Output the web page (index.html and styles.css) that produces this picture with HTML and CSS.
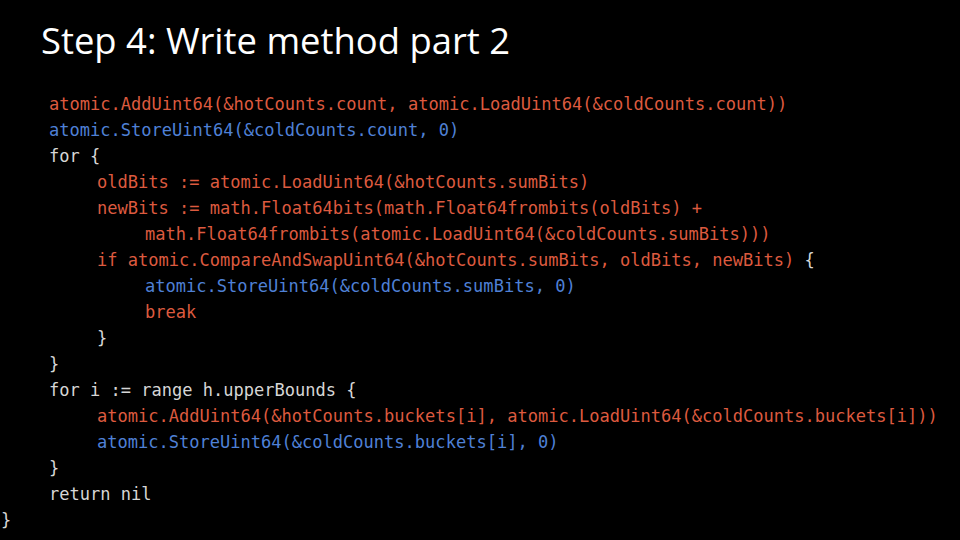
FILE: index.html
```html
<!DOCTYPE html>
<html>
<head>
<meta charset="utf-8">
<link rel="stylesheet" href="styles.css">
</head>
<body>
<div class="slide">
  <h1 class="title">Step 4: Write method part 2</h1>
  <div class="code">
    <div class="line l1 red">atomic.AddUint64(&amp;hotCounts.count, atomic.LoadUint64(&amp;coldCounts.count))</div>
    <div class="line l1 blue">atomic.StoreUint64(&amp;coldCounts.count, 0)</div>
    <div class="line l1">for {</div>
    <div class="line l2 red">oldBits := atomic.LoadUint64(&amp;hotCounts.sumBits)</div>
    <div class="line l2 red">newBits := math.Float64bits(math.Float64frombits(oldBits) +</div>
    <div class="line l3 red">math.Float64frombits(atomic.LoadUint64(&amp;coldCounts.sumBits)))</div>
    <div class="line l2"><span class="red">if atomic.CompareAndSwapUint64(&amp;hotCounts.sumBits, oldBits, newBits)</span> {</div>
    <div class="line l3 blue">atomic.StoreUint64(&amp;coldCounts.sumBits, 0)</div>
    <div class="line l3 red">break</div>
    <div class="line l2">}</div>
    <div class="line l1">}</div>
    <div class="line l1">for i := range h.upperBounds {</div>
    <div class="line l2 red">atomic.AddUint64(&amp;hotCounts.buckets[i], atomic.LoadUint64(&amp;coldCounts.buckets[i]))</div>
    <div class="line l2 blue">atomic.StoreUint64(&amp;coldCounts.buckets[i], 0)</div>
    <div class="line l1">}</div>
    <div class="line l1">return nil</div>
    <div class="line l0">}</div>
  </div>
</div>
</body>
</html>
```
FILE: styles.css
```css
html, body {
  margin: 0;
  padding: 0;
  background: #000;
}
.slide {
  width: 960px;
  height: 540px;
  background: #000;
  overflow: hidden;
  display: flex;
  flex-direction: column;
}
.title {
  margin: 0;
  padding: 16px 0 0 41px;
  font-family: "Open Sans", sans-serif;
  font-weight: 400;
  font-size: 36.4px;
  line-height: 48px;
  color: #ffffff;
}
.code {
  margin-top: 27px;
  padding-left: 1px;
  font-family: "DejaVu Sans Mono", monospace;
  font-size: 17.04px;
  line-height: 26px;
  color: #d6d6d6;
}
.line {
  white-space: pre;
}
.line.l0 { padding-left: 0; }
.line.l1 { padding-left: 48px; }
.line.l2 { padding-left: 96px; }
.line.l3 { padding-left: 144px; }
.red { color: #dc5a3f; }
.blue { color: #4f80d6; }
```
